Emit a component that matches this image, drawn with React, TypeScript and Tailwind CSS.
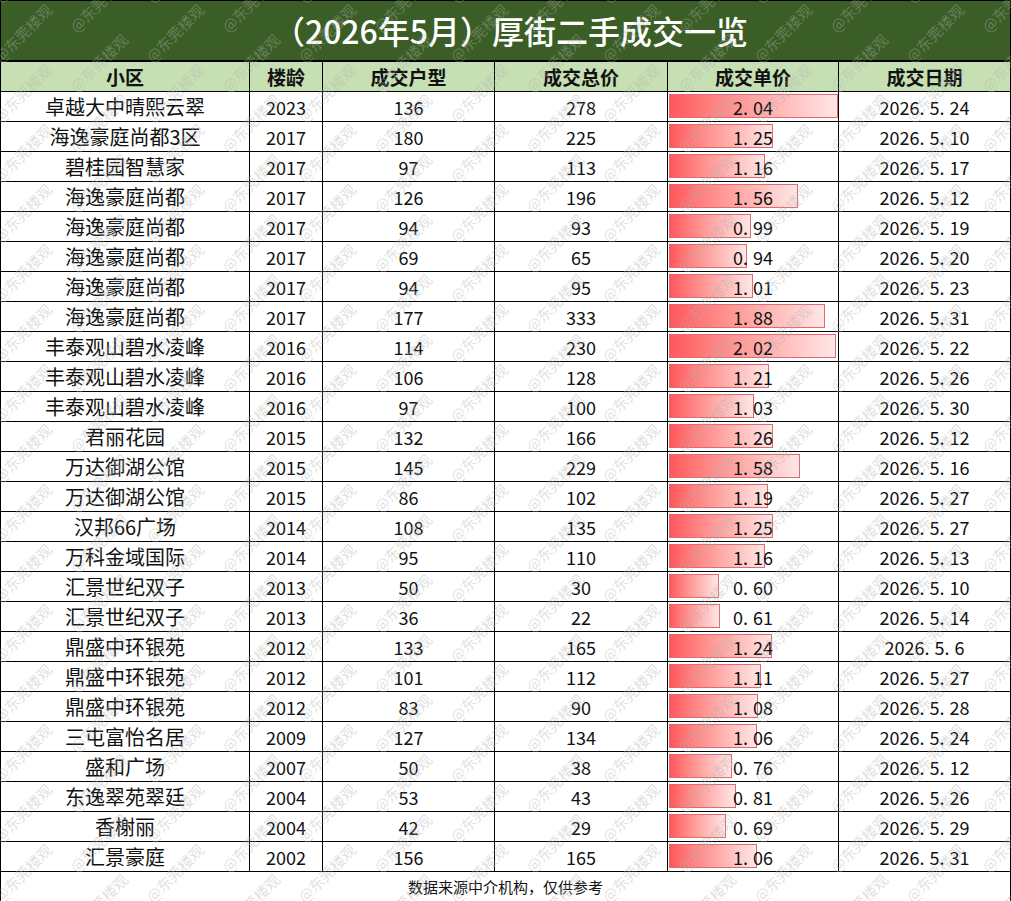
import React from "react";

type Deal = {
  name: string;
  year: string;
  area: string;
  total: string;
  unit: string;
  date: string;
};

const deals: Deal[] = [
  { name: "卓越大中晴熙云翠", year: "2023", area: "136", total: "278", unit: "2.04", date: "2026.5.24" },
  { name: "海逸豪庭尚都3区", year: "2017", area: "180", total: "225", unit: "1.25", date: "2026.5.10" },
  { name: "碧桂园智慧家", year: "2017", area: "97", total: "113", unit: "1.16", date: "2026.5.17" },
  { name: "海逸豪庭尚都", year: "2017", area: "126", total: "196", unit: "1.56", date: "2026.5.12" },
  { name: "海逸豪庭尚都", year: "2017", area: "94", total: "93", unit: "0.99", date: "2026.5.19" },
  { name: "海逸豪庭尚都", year: "2017", area: "69", total: "65", unit: "0.94", date: "2026.5.20" },
  { name: "海逸豪庭尚都", year: "2017", area: "94", total: "95", unit: "1.01", date: "2026.5.23" },
  { name: "海逸豪庭尚都", year: "2017", area: "177", total: "333", unit: "1.88", date: "2026.5.31" },
  { name: "丰泰观山碧水凌峰", year: "2016", area: "114", total: "230", unit: "2.02", date: "2026.5.22" },
  { name: "丰泰观山碧水凌峰", year: "2016", area: "106", total: "128", unit: "1.21", date: "2026.5.26" },
  { name: "丰泰观山碧水凌峰", year: "2016", area: "97", total: "100", unit: "1.03", date: "2026.5.30" },
  { name: "君丽花园", year: "2015", area: "132", total: "166", unit: "1.26", date: "2026.5.12" },
  { name: "万达御湖公馆", year: "2015", area: "145", total: "229", unit: "1.58", date: "2026.5.16" },
  { name: "万达御湖公馆", year: "2015", area: "86", total: "102", unit: "1.19", date: "2026.5.27" },
  { name: "汉邦66广场", year: "2014", area: "108", total: "135", unit: "1.25", date: "2026.5.27" },
  { name: "万科金域国际", year: "2014", area: "95", total: "110", unit: "1.16", date: "2026.5.13" },
  { name: "汇景世纪双子", year: "2013", area: "50", total: "30", unit: "0.60", date: "2026.5.10" },
  { name: "汇景世纪双子", year: "2013", area: "36", total: "22", unit: "0.61", date: "2026.5.14" },
  { name: "鼎盛中环银苑", year: "2012", area: "133", total: "165", unit: "1.24", date: "2026.5.6" },
  { name: "鼎盛中环银苑", year: "2012", area: "101", total: "112", unit: "1.11", date: "2026.5.27" },
  { name: "鼎盛中环银苑", year: "2012", area: "83", total: "90", unit: "1.08", date: "2026.5.28" },
  { name: "三屯富怡名居", year: "2009", area: "127", total: "134", unit: "1.06", date: "2026.5.24" },
  { name: "盛和广场", year: "2007", area: "50", total: "38", unit: "0.76", date: "2026.5.12" },
  { name: "东逸翠苑翠廷", year: "2004", area: "53", total: "43", unit: "0.81", date: "2026.5.26" },
  { name: "香榭丽", year: "2004", area: "42", total: "29", unit: "0.69", date: "2026.5.29" },
  { name: "汇景豪庭", year: "2002", area: "156", total: "165", unit: "1.06", date: "2026.5.31" },
];

const headers = ["小区", "楼龄", "成交户型", "成交总价", "成交单价", "成交日期"];

// the source font gives the dot a full digit slot, so pad it out
function Dotted({ text }: { text: string }) {
  const parts = text.split(".");
  return (
    <>
      {parts.map((p, i) => (
        <React.Fragment key={i}>
          {p}
          {i < parts.length - 1 && <span className="inline-block w-[10px] text-left">.</span>}
        </React.Fragment>
      ))}
    </>
  );
}

function Watermark() {
  const marks: { x: number; y: number }[] = [];
  for (let c = 0; c < 14; c++) {
    for (let r = -1; r < 16; r++) {
      marks.push({ x: -14 + c * 76, y: r * 60 + (c % 2 === 1 ? 30 : 0) });
    }
  }
  return (
    <div className="pointer-events-none absolute inset-0 overflow-hidden">
      {marks.map((m, i) => (
        <div
          key={i}
          className="absolute -rotate-45 whitespace-nowrap text-[15px] text-[#b0b0b0]/40"
          style={{ left: m.x, top: m.y + 22 }}
        >
          @东莞楼观
        </div>
      ))}
    </div>
  );
}

export default function App() {
  return (
    <div className="relative h-[901px] w-[1011px] bg-white font-['Noto_Sans_CJK_SC','Noto_Sans',sans-serif] text-[#111]">
      <div className="flex h-[61px] items-center justify-center border border-black bg-[#3a5e25] pb-[2px] pl-[10px] text-[32px] font-medium text-white">
        （2026年5月）厚街二手成交一览
      </div>
      <table className="w-[1010px] table-fixed border-collapse">
        <colgroup>
          <col className="w-[249px]" />
          <col className="w-[73px]" />
          <col className="w-[172px]" />
          <col className="w-[173px]" />
          <col className="w-[171px]" />
          <col className="w-[172px]" />
        </colgroup>
        <thead>
          <tr className="h-[30px] bg-[#c6e0b4]">
            {headers.map((h) => (
              <th key={h} className="border border-black p-0 text-center text-[19px] font-bold leading-none">
                {h}
              </th>
            ))}
          </tr>
        </thead>
        <tbody>
          {deals.map((d, i) => (
            <tr key={i} className="h-[30px]">
              <td className="border border-black p-0 text-center text-[20px] leading-none">{d.name}</td>
              <td className="border border-black p-0 text-center text-[18px] leading-none">{d.year}</td>
              <td className="border border-black p-0 text-center text-[18px] leading-none">{d.area}</td>
              <td className="border border-black p-0 text-center text-[18px] leading-none">{d.total}</td>
              <td className="relative border border-black p-0 text-center text-[18px] leading-none">
                <div
                  className="absolute left-[1px] top-[2px] bottom-[3px] border border-[#e36b6e] bg-gradient-to-r from-[#ff565c] to-[#fde6e7]"
                  style={{ width: Math.round(parseFloat(d.unit) * 82.8) }}
                />
                <span className="relative">
                  <Dotted text={d.unit} />
                </span>
              </td>
              <td className="border border-black p-0 text-center text-[18px] leading-none">
                <Dotted text={d.date} />
              </td>
            </tr>
          ))}
          <tr className="h-[30px]">
            <td colSpan={6} className="border border-black p-0 text-center text-[15px] leading-none">
              数据来源中介机构，仅供参考
            </td>
          </tr>
        </tbody>
      </table>
      <Watermark />
    </div>
  );
}
